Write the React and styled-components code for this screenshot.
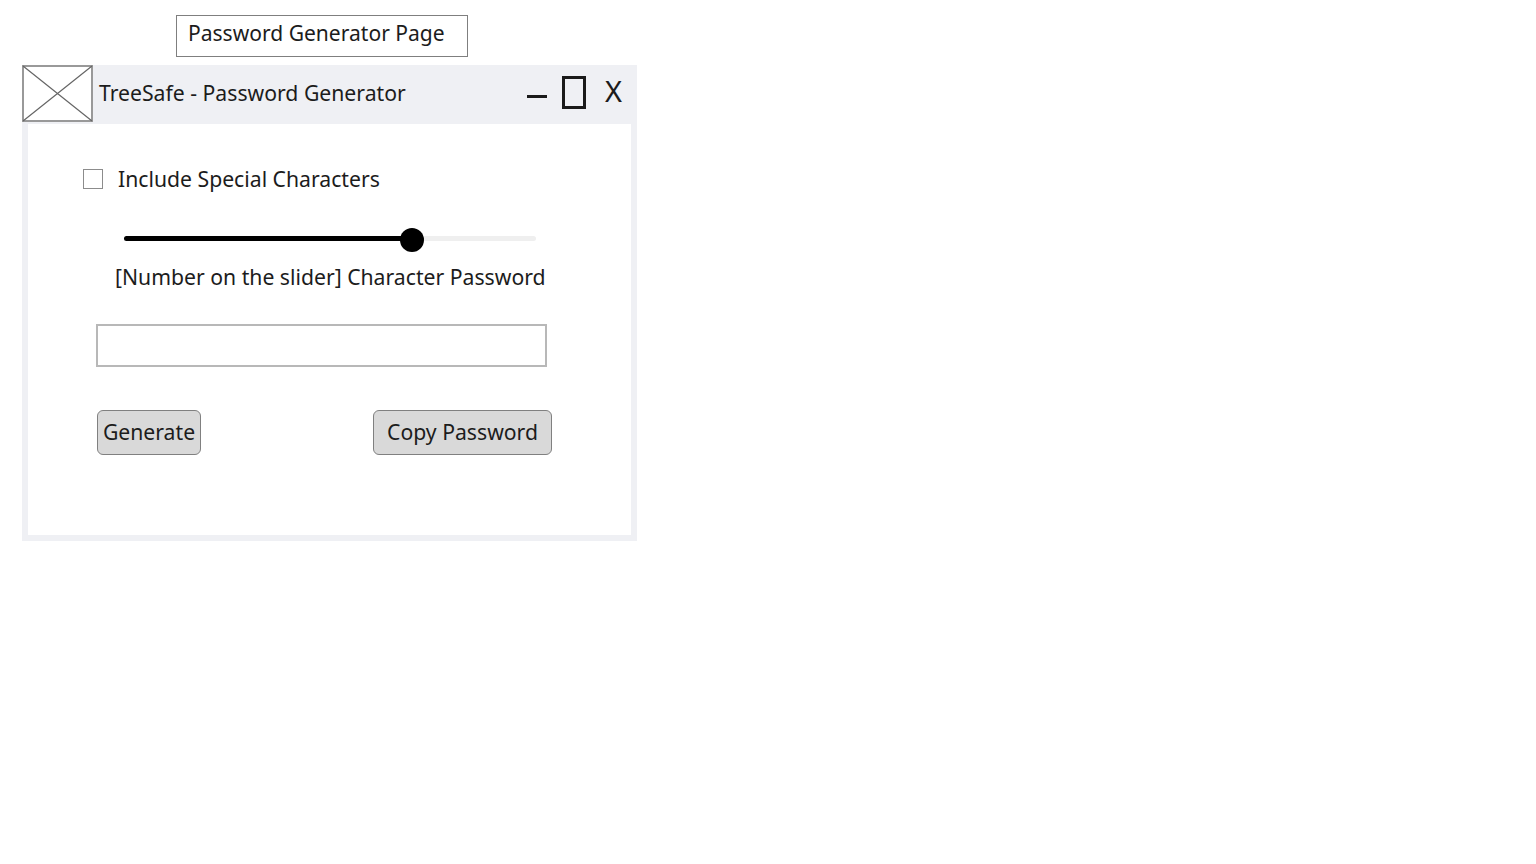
import React from 'react';
import styled, { createGlobalStyle } from 'styled-components';

const GlobalStyle = createGlobalStyle`
  body {
    margin: 0;
    background: #fff;
    color: #1c1c1c;
    font-family: "Noto Sans", "Open Sans", sans-serif;
    font-size: 21.2px;
  }
`;

const Page = styled.div`
  padding: 15px 0 0 22px;
`;

const PageTitle = styled.div`
  box-sizing: border-box;
  width: 292px;
  height: 42px;
  margin-left: 154px;
  padding-left: 11px;
  border: 1px solid #7f7f7f;
  font-size: 21.05px;
  line-height: 34px;
`;

const Window = styled.div`
  display: flex;
  flex-direction: column;
  width: 615px;
  height: 476px;
  margin-top: 8px;
  background: #eff0f4;
`;

const TitleBar = styled.div`
  display: flex;
  align-items: flex-start;
  height: 59px;
  flex-shrink: 0;
`;

const Placeholder = styled.svg`
  display: block;
  width: 71px;
  height: 57px;
  flex-shrink: 0;
`;

const WindowTitle = styled.div`
  margin-left: 6px;
  line-height: 55px;
`;

const Controls = styled.div`
  display: flex;
  align-items: flex-start;
  margin-left: auto;
  padding-right: 15px;
`;

const Minimize = styled.div`
  width: 20px;
  height: 3px;
  margin-top: 30px;
  background: #1a1a1a;
`;

const Maximize = styled.div`
  box-sizing: border-box;
  width: 24px;
  height: 33px;
  margin: 11px 0 0 15px;
  border: 3px solid #1a1a1a;
`;

const Close = styled.div`
  margin-left: 19px;
  font-size: 29px;
  line-height: 52px;
`;

const Body = styled.div`
  flex: 1;
  margin: 0 6px 6px;
  background: #fff;
`;

const CheckRow = styled.label`
  display: flex;
  align-items: center;
  gap: 15px;
  height: 20px;
  margin: 45px 0 0 55px;
  line-height: 18px;
`;

const CheckBox = styled.input`
  appearance: none;
  box-sizing: border-box;
  width: 20px;
  height: 20px;
  margin: 0;
  border: 1px solid #8c8c8c;
  background: #fff;
`;

const SliderTrack = styled.div`
  position: relative;
  width: 412px;
  height: 5px;
  margin: 47px 0 0 96px;
  border-radius: 3px;
  background: #efefef;
`;

const SliderFill = styled.div`
  position: relative;
  height: 100%;
  border-radius: 3px;
  background: #000;
`;

const SliderThumb = styled.div`
  position: absolute;
  right: -12px;
  top: -8px;
  width: 24px;
  height: 24px;
  border-radius: 50%;
  background: #000;
`;

const Caption = styled.div`
  margin: 18px 0 0 87px;
  line-height: 36px;
`;

const PasswordInput = styled.input`
  display: block;
  box-sizing: border-box;
  width: 451px;
  height: 43px;
  margin: 29px 0 0 68px;
  border: 2px solid #b8b8b8;
  background: #fff;
`;

const ButtonRow = styled.div`
  display: flex;
  justify-content: space-between;
  width: 455px;
  margin: 43px 0 0 69px;
`;

const Button = styled.button`
  box-sizing: border-box;
  width: ${(props) => props.$width}px;
  height: 45px;
  padding: 0 0 2px;
  border: 1px solid #808080;
  border-radius: 6px;
  background: #d9d9d9;
  color: #1c1c1c;
  font-family: inherit;
  font-size: inherit;
`;

export default function App() {
  const sliderValue = 70;

  return (
    <>
      <GlobalStyle />
      <Page>
        <PageTitle>Password Generator Page</PageTitle>
        <Window>
          <TitleBar>
            <Placeholder viewBox="0 0 71 57">
              <rect x="1" y="1" width="69" height="55" fill="#fff" stroke="#999" strokeWidth="2" />
              <path d="M1 1L70 56M70 1L1 56" stroke="#666" strokeWidth="1.2" fill="none" />
            </Placeholder>
            <WindowTitle>TreeSafe - Password Generator</WindowTitle>
            <Controls>
              <Minimize />
              <Maximize />
              <Close>X</Close>
            </Controls>
          </TitleBar>
          <Body>
            <CheckRow>
              <CheckBox type="checkbox" />
              Include Special Characters
            </CheckRow>
            <SliderTrack>
              <SliderFill style={{ width: `${sliderValue}%` }}>
                <SliderThumb />
              </SliderFill>
            </SliderTrack>
            <Caption>[Number on the slider] Character Password</Caption>
            <PasswordInput type="text" />
            <ButtonRow>
              <Button $width={104}>Generate</Button>
              <Button $width={179}>Copy Password</Button>
            </ButtonRow>
          </Body>
        </Window>
      </Page>
    </>
  );
}
